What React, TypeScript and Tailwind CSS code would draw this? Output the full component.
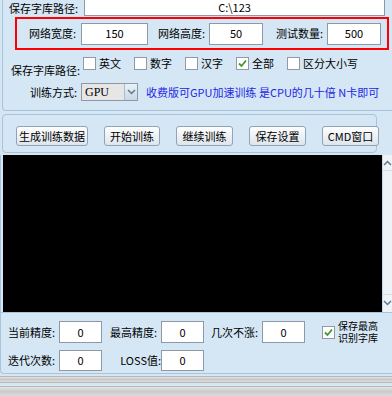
import React from 'react'

const font = "font-['Noto_Sans_CJK_SC','Noto_Sans',sans-serif]"

const Check: React.FC<{ checked?: boolean }> = ({ checked }) => (
    <span className="flex h-[13px] w-[13px] shrink-0 items-center justify-center border border-[#8f9aa6] bg-white">
        {checked && (
            <svg viewBox="0 0 11 11" className="h-[11px] w-[11px]">
                <path d="M2 5.5 L4.5 8 L9 2.5" fill="none" stroke="#3f9a2a" strokeWidth="1.8" />
            </svg>
        )}
    </span>
)

const Box: React.FC<{ value: string; w: string; h?: string }> = ({ value, w, h = 'h-[22px]' }) => (
    <div className={`${w} ${h} flex shrink-0 items-center justify-center border border-[#8d99a6] bg-white text-[11px] text-black`}>
        {value}
    </div>
)

const Btn: React.FC<{ label: string; w: string }> = ({ label, w }) => (
    <button className={`${w} flex h-[20px] shrink-0 items-center justify-center rounded-[3px] border border-[#8fa4b8] bg-gradient-to-b from-[#fefefe] to-[#dde5ec] text-[11px] text-black`}>
        {label}
    </button>
)

const Chevron: React.FC<{ up?: boolean }> = ({ up }) => (
    <svg viewBox="0 0 9 6" className="h-[6px] w-[9px]">
        <path d={up ? 'M1 5 L4.5 1.5 L8 5' : 'M1 1 L4.5 4.5 L8 1'} fill="none" stroke="#5d7a94" strokeWidth="1.5" />
    </svg>
)

const App: React.FC = () => {
    return (
        <div className={`${font} relative flex h-[396px] w-[392px] flex-col overflow-hidden whitespace-nowrap bg-[#d5e7f4] text-[11px] leading-none text-black`}>
            {/* top settings group */}
            <div className="ml-[2px] flex h-[111px] shrink-0 flex-col rounded-bl-[4px] border-b border-l border-[#a8c4da]">
                <div className="flex h-[16px] items-center">
                    <span className="w-[81px] pl-[6px]">保存字库路径:</span>
                    <div className="flex h-[16px] w-[301px] items-center justify-center border border-t-0 border-[#8d99a6] bg-white">
                        C:\123
                    </div>
                </div>

                <div className="ml-[12px] mt-[1px] flex h-[33px] w-[374px] items-center border-2 border-[#ff0000] pl-[12px]">
                    <span className="w-[52px]">网络宽度:</span>
                    <Box value="150" w="w-[67px]" />
                    <span className="ml-[10px] w-[51px]">网络高度:</span>
                    <Box value="50" w="w-[54px]" />
                    <span className="ml-[13px] w-[51px]">测试数量:</span>
                    <Box value="500" w="w-[54px]" />
                </div>

                <div className="mt-[6px] flex h-[20px]">
                    <span className="w-[80px] self-end pl-[8px]">保存字库路径:</span>
                    {[
                        ['英文', false],
                        ['数字', false],
                        ['汉字', false],
                        ['全部', true],
                        ['区分大小写', false],
                    ].map(([t, c]) => (
                        <div key={t as string} className="flex w-[51px] items-center gap-[3px] self-start pt-[1px]">
                            <Check checked={c as boolean} />
                            <span>{t as string}</span>
                        </div>
                    ))}
                </div>

                <div className="mt-[7px] flex h-[18px] items-center">
                    <span className="w-[78px] pl-[27px]">训练方式:</span>
                    <div className="flex h-[18px] w-[57px] border border-[#8d99a6]">
                        <div className="flex flex-1 items-center bg-[#e6e6e6] pl-[3px] font-['Liberation_Serif',serif] text-[12px]">GPU</div>
                        <div className="flex w-[13px] items-center justify-center border-l border-[#a9bccc] bg-gradient-to-b from-[#e9f1f7] to-[#c8d9e6]">
                            <Chevron />
                        </div>
                    </div>
                    <span className="ml-[8px] text-[#2424e6]">收费版可GPU加速训练 是CPU的几十倍 N卡即可</span>
                </div>
            </div>

            {/* buttons group */}
            <div className="ml-[2px] mt-[3px] flex h-[39px] w-[375px] shrink-0 items-start gap-[16px] rounded-[4px] border border-[#a8c4da] pl-[13px] pt-[11px]">
                <Btn label="生成训练数据" w="w-[72px]" />
                <Btn label="开始训练" w="w-[56px]" />
                <Btn label="继续训练" w="w-[57px]" />
                <Btn label="保存设置" w="w-[57px]" />
                <Btn label="CMD窗口" w="w-[57px]" />
            </div>

            {/* output console */}
            <div className="mt-[2px] flex h-[157px] shrink-0 border-l border-[#a8c4da] pl-[2px]">
                <div className="flex-1 bg-black" />
                <div className="flex w-[10px] flex-col justify-between border-l border-[#c6d6e2] bg-[#eef3f7]">
                    <div className="flex h-[16px] items-center justify-center border-b border-[#d4dfe8]">
                        <Chevron up />
                    </div>
                    <div className="mb-[2px] flex h-[16px] items-center justify-center border-t border-[#d4dfe8]">
                        <Chevron />
                    </div>
                </div>
            </div>

            {/* stats group */}
            <div className="flex h-[62px] shrink-0 flex-col rounded-bl-[4px] border-b border-l border-t border-[#a8c4da] pl-[7px]">
                <div className="mt-[8px] flex h-[22px] items-center">
                    <span className="w-[51px]">当前精度:</span>
                    <Box value="0" w="w-[43px]" />
                    <span className="ml-[8px] w-[51px]">最高精度:</span>
                    <Box value="0" w="w-[43px]" />
                    <span className="ml-[7px] w-[51px]">几次不涨:</span>
                    <Box value="0" w="w-[43px]" />
                    <div className="ml-[17px] flex items-center gap-[3px]">
                        <Check checked />
                        <div className="flex flex-col text-[10px] leading-[12px]">
                            <span>保存最高</span>
                            <span>识别字库</span>
                        </div>
                    </div>
                </div>
                <div className="mt-[7px] flex h-[21px] items-center">
                    <span className="w-[51px]">迭代次数:</span>
                    <Box value="0" w="w-[43px]" h="h-[21px]" />
                    <span className="ml-[8px] w-[51px] text-right">LOSS值:</span>
                    <Box value="0" w="w-[43px]" h="h-[21px]" />
                </div>
            </div>

            {/* progress bars */}
            <div className="mt-[2px] h-[7px] shrink-0 border-y border-[#b9b9b9] bg-gradient-to-b from-[#e2e2e2] via-[#c9c9c9] to-[#dedede]" />
            <div className="mt-[3px] h-[10px] shrink-0 border-t border-[#b9b9b9] bg-gradient-to-b from-[#e4e4e4] via-[#cbcbcb] to-[#dcdcdc]" />
        </div>
    )
}

export default App
